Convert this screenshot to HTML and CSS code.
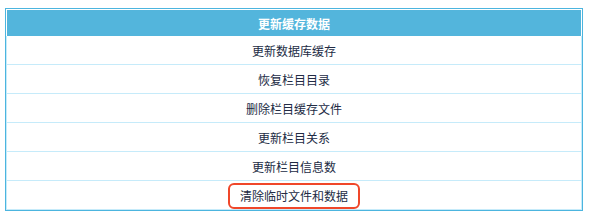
FILE: index.html
```html
<!DOCTYPE html>
<html lang="zh-CN">
<head>
  <meta charset="UTF-8" />
  <meta name="viewport" content="width=device-width, initial-scale=1.0"/>
  <title>更新缓存数据</title>
  <link rel="stylesheet" href="styles.css">
</head>
<body>
  <div class="panel">
    <div class="panel-head">更新缓存数据</div>
    <div class="row">更新数据库缓存</div>
    <div class="row">恢复栏目目录</div>
    <div class="row">删除栏目缓存文件</div>
    <div class="row">更新栏目关系</div>
    <div class="row">更新栏目信息数</div>
    <div class="row"><span class="mark">清除临时文件和数据</span></div>
  </div>
</body>
</html>
```

FILE: styles.css
```css
* { box-sizing: border-box; margin: 0; padding: 0; }
html, body { background: #fff; }
body {
  font-family: "Noto Sans CJK SC", "Noto Sans", sans-serif;
  font-size: 12px;
  color: #222b44;
  padding: 8px 6px 0 5px;
}
.panel {
  border: 1px solid #4cb5df;
}
.panel-head {
  height: 27px;
  border: 1px solid #fff;
  border-bottom: 0;
  background: #53b5dc;
  color: #fff;
  font-weight: bold;
  display: flex; justify-content: center; align-items: center;
}
.row {
  height: 29px;
  border: 1px solid #c6ebfa;
  border-top: 0;
  display: flex; justify-content: center; align-items: center;
}
.mark {
  display: inline-block;
  height: 26px;
  line-height: 21px;
  padding: 0 10px;
  border: 2.5px solid #f0472a;
  border-radius: 6px;
  margin-top: 2px;
}
```
